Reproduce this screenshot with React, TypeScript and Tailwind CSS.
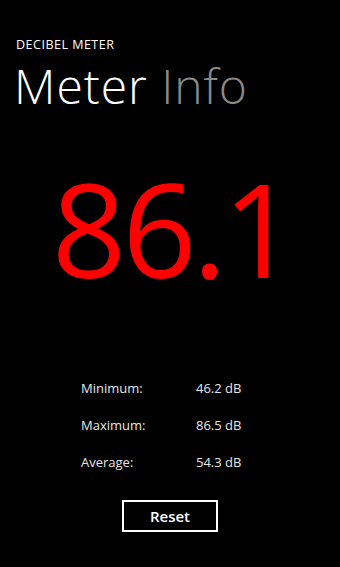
export default function App() {
  const stats = [
    { label: "Minimum:", value: "46.2 dB" },
    { label: "Maximum:", value: "86.5 dB" },
    { label: "Average:", value: "54.3 dB" },
  ];

  return (
    <div
      className="w-[340px] h-[567px] bg-black text-white overflow-hidden flex flex-col"
      style={{ fontFamily: '"Open Sans", "Noto Sans", sans-serif' }}
    >
      {/* Header */}
      <div className="pl-[16px] pt-[36px]">
        <p className="text-[12.5px] font-medium leading-[17px] tracking-[0.04em]">DECIBEL METER</p>
        <h1 className="text-[48px] font-light leading-[66px] tracking-[0.02em] -ml-[2px]">
          Meter <span className="text-[#8a8a8a]">Info</span>
        </h1>
      </div>

      {/* Current reading */}
      <div className="flex justify-center mt-[42px] pl-[5px]">
        <span className="text-[130px] leading-[134px] text-[#ff0000] tracking-[-0.03em]">86.1</span>
      </div>

      {/* Stats */}
      <div className="mt-[84px] flex flex-col gap-[19px] pl-[81px]">
        {stats.map((s) => (
          <div key={s.label} className="flex text-[13px] leading-[18px] text-[#e6e6e6]">
            <span className="w-[115px]">{s.label}</span>
            <span>{s.value}</span>
          </div>
        ))}
      </div>

      {/* Reset */}
      <div className="flex justify-center mt-[29px]">
        <button className="w-[96px] h-[32px] border-2 border-white text-[15px] font-semibold leading-none">
          Reset
        </button>
      </div>
    </div>
  );
}
